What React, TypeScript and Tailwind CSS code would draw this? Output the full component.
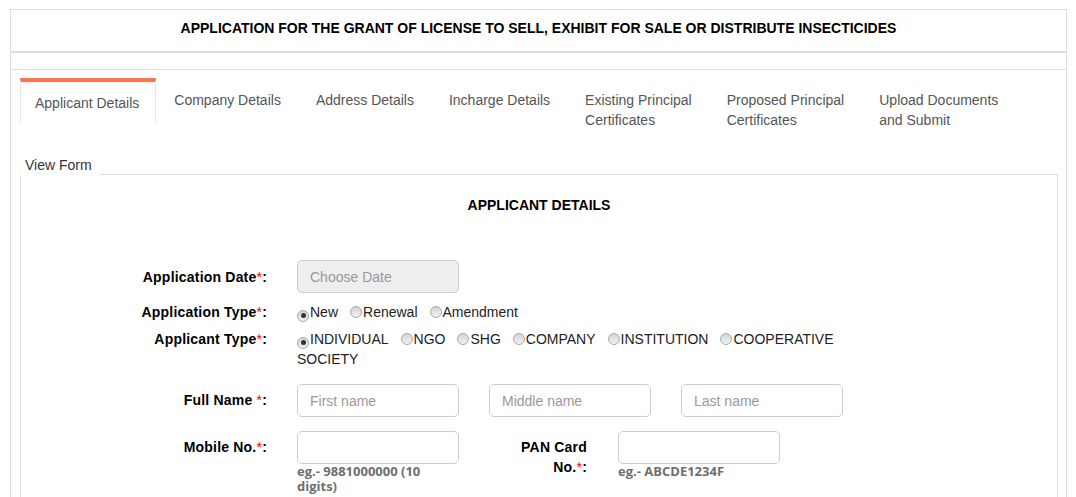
import React from "react"

const tabs = [
    { lines: ["Applicant Details"], active: true },
    { lines: ["Company Details"] },
    { lines: ["Address Details"] },
    { lines: ["Incharge Details"] },
    { lines: ["Existing Principal", "Certificates"] },
    { lines: ["Proposed Principal", "Certificates"] },
    { lines: ["Upload Documents", "and Submit"] },
]

function Req() {
    return <span className="text-[#ff0000] font-normal">*</span>
}

function Radio({ label, checked }: { label: string; checked?: boolean }) {
    return (
        <label className="mr-[12px]">
            <span className="inline-flex items-center justify-center w-[12px] h-[12px] rounded-full border border-[#a9a9a9] bg-gradient-to-b from-[#d4d4d4] to-[#f2f2f2] align-[-1px] mr-[1px]">
                {checked && <span className="w-[5px] h-[5px] rounded-full bg-[#333]" />}
            </span>
            {label}
        </label>
    )
}

function TextInput({ placeholder, disabled }: { placeholder?: string; disabled?: boolean }) {
    return (
        <input
            type="text"
            placeholder={placeholder}
            disabled={disabled}
            className={`w-[162px] h-[33px] rounded-[5px] border border-[#cccccc] px-[12px] text-[14px] text-[#555] placeholder:text-[#999] outline-none ${disabled ? "bg-[#eeeeee]" : "bg-white"}`}
        />
    )
}

function Label({ children, className = "" }: { children: React.ReactNode; className?: string }) {
    return <div className={`w-[246px] shrink-0 text-right font-bold text-[14px] leading-[20px] tracking-[0.2px] text-black ${className}`}>{children}</div>
}

function Hint({ children }: { children: React.ReactNode }) {
    return (
        <p className="font-bold text-[13px] leading-[15px] text-[#6e6e6e]" style={{ fontFamily: '"Open Sans", sans-serif' }}>
            {children}
        </p>
    )
}

export default function App() {
    return (
        <div className="min-h-[497px] bg-white" style={{ fontFamily: '"Liberation Sans", Arial, sans-serif' }}>
            <div className="ml-[10px] mr-[9px] mt-[9px] border border-[#dddddd]">
                <div className="h-[43px] flex items-center justify-center pb-[5px] border-b-2 border-[#dddddd]">
                    <h1 className="font-bold text-[14px] text-black">APPLICATION FOR THE GRANT OF LICENSE TO SELL, EXHIBIT FOR SALE OR DISTRIBUTE INSECTICIDES</h1>
                </div>
                <div className="h-[17px] border-b border-[#dddddd]" />

                <div className="pl-[9px] pr-[8px] pt-[8px] pb-[40px]">
                    <div className="flex items-start">
                        {tabs.map(t =>
                            t.active ? (
                                <div key={t.lines[0]} className="border-t-4 border-t-[#ff7152] border-x border-x-[#e6e6e6] pl-[14px] pr-[16px] pt-[11px] pb-[10px] text-[14px] leading-[20px] text-[#555]">
                                    {t.lines[0]}
                                </div>
                            ) : (
                                <div key={t.lines[0]} className="pl-[18px] pr-[17px] pt-[12px] text-[14px] leading-[20px] text-[#555] whitespace-nowrap">
                                    {t.lines.map((l, i) => <div key={i}>{l}</div>)}
                                </div>
                            )
                        )}
                    </div>

                    <div className="flex items-end mt-[25px]">
                        <div className="w-[79px] pl-[5px] h-[20px] text-[14px] leading-[20px] text-[#333]">View Form</div>
                        <div className="flex-1 border-b border-[#dddddd]" />
                    </div>

                    <div className="border-x border-b border-[#dddddd] pt-[21px] pb-[30px]">
                        <h2 className="text-center font-bold text-[14px] leading-[18px] text-black">APPLICANT DETAILS</h2>

                        <div className="flex items-start gap-[30px] mt-[46px]">
                            <Label className="pt-[7px]">Application Date<Req />:</Label>
                            <TextInput placeholder="Choose Date" disabled />
                        </div>

                        <div className="flex items-start gap-[30px] mt-[9px]">
                            <Label>Application Type<Req />:</Label>
                            <div className="text-[14px] leading-[20px] text-[#222]">
                                <Radio label="New" checked />
                                <Radio label="Renewal" />
                                <Radio label="Amendment" />
                            </div>
                        </div>

                        <div className="flex items-start gap-[30px] mt-[7px]">
                            <Label>Applicant Type<Req />:</Label>
                            <div className="w-[560px] text-[14px] leading-[20px] text-[#222]">
                                <Radio label="INDIVIDUAL" checked />
                                <Radio label="NGO" />
                                <Radio label="SHG" />
                                <Radio label="COMPANY" />
                                <Radio label="INSTITUTION" />
                                <Radio label="COOPERATIVE SOCIETY" />
                            </div>
                        </div>

                        <div className="flex items-start gap-[30px] mt-[15px]">
                            <Label className="pt-[6px]">Full Name <Req />:</Label>
                            <TextInput placeholder="First name" />
                            <TextInput placeholder="Middle name" />
                            <TextInput placeholder="Last name" />
                        </div>

                        <div className="flex items-start mt-[14px]">
                            <Label className="pt-[6px]">Mobile No.<Req />:</Label>
                            <div className="ml-[30px] w-[162px]">
                                <TextInput />
                                <Hint>eg.- 9881000000 (10 digits)</Hint>
                            </div>
                            <div className="ml-[48px] w-[80px] pt-[6px] text-right font-bold text-[14px] leading-[20px] tracking-[0.2px] text-black">PAN Card No.<Req />:</div>
                            <div className="ml-[31px] w-[162px]">
                                <TextInput />
                                <Hint>eg.- ABCDE1234F</Hint>
                            </div>
                        </div>
                    </div>
                </div>
            </div>
        </div>
    )
}
